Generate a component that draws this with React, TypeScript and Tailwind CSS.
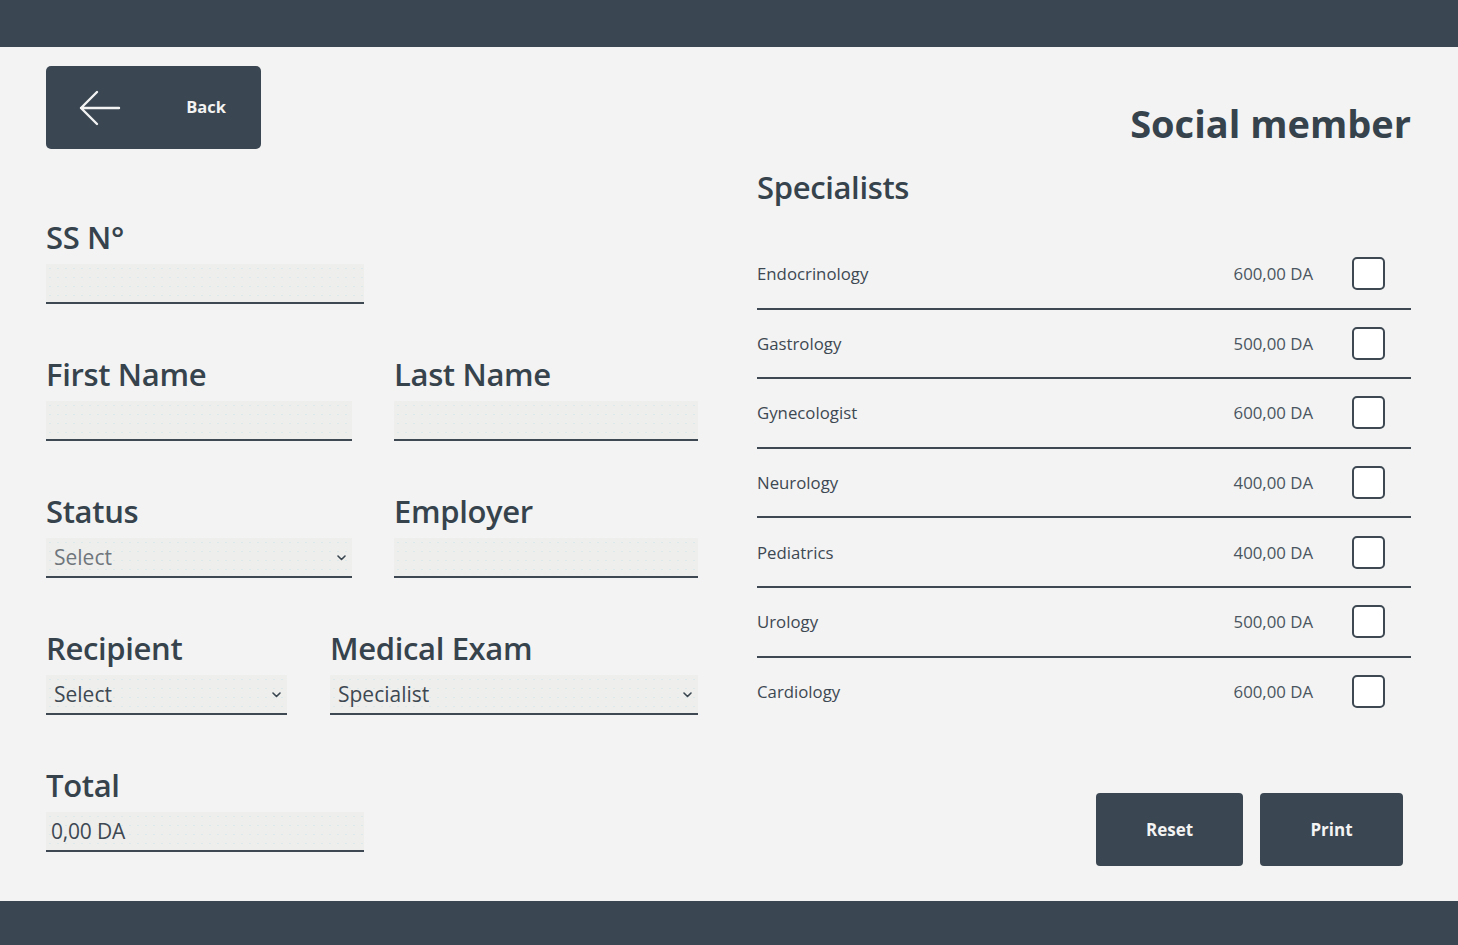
import React from "react";

const Chevron = () => (
  <svg width="9" height="6" viewBox="0 0 9 6" fill="none" className="shrink-0">
    <path d="M1 1l3.5 3.5L8 1" stroke="#3a4650" strokeWidth="1.6" strokeLinecap="round" strokeLinejoin="round" />
  </svg>
);

const inputBase =
  "h-[40px] pt-[2px] bg-[#eeeeec] bg-[radial-gradient(circle,#dde8eb_0.6px,transparent_0.9px)] bg-[length:8px_9px] border-b-2 border-[#3d4852] flex items-center";

function Label({ children }: { children: React.ReactNode }) {
  return (
    <div className="text-[31px] leading-[37px] font-semibold tracking-[-0.35px] text-[#36434d] mb-[8px] whitespace-nowrap">
      {children}
    </div>
  );
}

function TextField({ w, value }: { w: string; value?: string }) {
  return (
    <div className={`${inputBase} ${w} pl-[5px]`}>
      {value && <span className="text-[21px] tracking-[-0.2px] text-[#3d4852]">{value}</span>}
    </div>
  );
}

function SelectField({ w, value, muted }: { w: string; value: string; muted?: boolean }) {
  return (
    <div className={`${inputBase} ${w} pl-[8px] pr-[6px] justify-between`}>
      <span className={`text-[21px] ${muted ? "text-[#6f767c]" : "text-[#3d4852]"}`}>{value}</span>
      <Chevron />
    </div>
  );
}

const specialists = [
  ["Endocrinology", "600,00 DA"],
  ["Gastrology", "500,00 DA"],
  ["Gynecologist", "600,00 DA"],
  ["Neurology", "400,00 DA"],
  ["Pediatrics", "400,00 DA"],
  ["Urology", "500,00 DA"],
  ["Cardiology", "600,00 DA"],
];

export default function App() {
  return (
    <div
      className="w-[1458px] h-[945px] bg-[#f3f3f3] flex flex-col overflow-hidden"
      style={{ fontFamily: "'Open Sans', 'Noto Sans', sans-serif" }}
    >
      <div className="h-[47px] bg-[#3a4651] shrink-0" />
      <div className="flex-1 flex pl-[46px] pr-[47px] pt-[19px]">
        {/* Left column */}
        <div className="w-[652px] flex flex-col">
          <button className="w-[215px] h-[83px] rounded-[5px] bg-[#3a4651] flex items-center justify-between pl-[33px] pr-[35px]">
            <svg width="42" height="36" viewBox="0 0 42 36" fill="none">
              <path d="M40 18H2M18 2L2 18l16 16" stroke="#f3f3f3" strokeWidth="2.4" strokeLinecap="round" strokeLinejoin="round" />
            </svg>
            <span className="text-[16.5px] font-bold text-[#f3f3f3]">Back</span>
          </button>

          <div className="mt-[70px]">
            <Label>SS N°</Label>
            <TextField w="w-[318px]" />
          </div>

          <div className="mt-[52px] flex gap-[42px]">
            <div>
              <Label>First Name</Label>
              <TextField w="w-[306px]" />
            </div>
            <div>
              <Label>Last Name</Label>
              <TextField w="w-[304px]" />
            </div>
          </div>

          <div className="mt-[52px] flex gap-[42px]">
            <div>
              <Label>Status</Label>
              <SelectField w="w-[306px]" value="Select" muted />
            </div>
            <div>
              <Label>Employer</Label>
              <TextField w="w-[304px]" />
            </div>
          </div>

          <div className="mt-[52px] flex gap-[43px]">
            <div>
              <Label>Recipient</Label>
              <SelectField w="w-[241px]" value="Select" />
            </div>
            <div>
              <Label>Medical Exam</Label>
              <SelectField w="w-[368px]" value="Specialist" />
            </div>
          </div>

          <div className="mt-[52px]">
            <Label>Total</Label>
            <TextField w="w-[318px]" value="0,00 DA" />
          </div>
        </div>

        {/* Right column */}
        <div className="ml-[59px] flex-1 flex flex-col">
          <div className="mt-[34px] text-right text-[38px] leading-[46px] font-bold text-[#36434d]">Social member</div>
          <div className="mt-[23px] text-[31px] leading-[37px] font-semibold tracking-[-0.35px] text-[#36434d]">Specialists</div>
          <div className="mt-[34px] flex flex-col">
            {specialists.map(([name, price], i) => (
              <div
                key={name}
                className={`h-[69.6px] flex items-center pr-[26px] border-b-2 ${
                  i < specialists.length - 1 ? "border-[#3d4852]" : "border-transparent"
                }`}
              >
                <span className="flex-1 text-[16.8px] text-[#3d4852]">{name}</span>
                <span className="text-[16.8px] text-[#4a5560]">{price}</span>
                <span className="ml-[39px] w-[33px] h-[33px] rounded-[5px] border-2 border-[#3d4852] bg-white" />
              </div>
            ))}
          </div>
          <div className="mt-[66px] flex justify-end gap-[17px] pr-[8px]">
            <button className="w-[147px] h-[73px] rounded-[4px] bg-[#3a4651] text-[17px] font-bold text-[#f3f3f3]">Reset</button>
            <button className="w-[143px] h-[73px] rounded-[4px] bg-[#3a4651] text-[17px] font-bold text-[#f3f3f3]">Print</button>
          </div>
        </div>
      </div>
      <div className="h-[44px] bg-[#3a4651] shrink-0" />
    </div>
  );
}
